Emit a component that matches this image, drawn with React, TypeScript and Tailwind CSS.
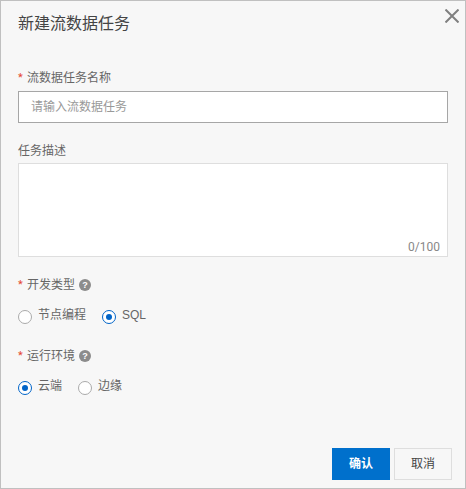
import React from "react";

function Req({ children, help }: { children: React.ReactNode; help?: boolean }) {
  return (
    <div className="flex items-center h-[18px] text-xs leading-[18px] text-[#666666]">
      <span className="text-[#e5452f] w-[9px] font-['Roboto',sans-serif] text-[11px]">*</span>
      <span>{children}</span>
      {help && (
        <span className="ml-[4px] w-3 h-3 rounded-full bg-[#8c8c8c] text-white text-[9px] leading-3 font-bold text-center">?</span>
      )}
    </div>
  );
}

function Radio({ checked, label, className }: { checked?: boolean; label: string; className?: string }) {
  return (
    <label className={`flex items-center h-[18px] text-xs text-[#666666] ${className ?? ""}`}>
      {checked ? (
        <span className="w-[14px] h-[14px] rounded-full border border-[#0064c8] bg-white flex items-center justify-center mr-[6px] mt-[3px]">
          <span className="w-[6px] h-[6px] rounded-full bg-[#0064c8]" />
        </span>
      ) : (
        <span className="w-[14px] h-[14px] rounded-full border border-[#aaaaaa] bg-white mr-[6px] mt-[3px]" />
      )}
      {label}
    </label>
  );
}

export default function App() {
  return (
    <div className="relative w-[466px] h-[489px] bg-[#f7f7f7] border border-[#c0c0c0] px-[17px] flex flex-col font-['Liberation_Sans','Noto_Sans_CJK_SC',sans-serif]">
      <button className="absolute right-[6px] top-[8px] text-[#808080]">
        <svg width="14" height="14" viewBox="0 0 14 14" fill="none" stroke="currentColor" strokeWidth="2">
          <path d="M0.5 0.5 L13.5 13.5 M13.5 0.5 L0.5 13.5" />
        </svg>
      </button>
      <h1 className="mt-[13px] h-[20px] text-base leading-5 font-normal text-[#444444]">新建流数据任务</h1>

      <div className="mt-[35px]">
        <Req>流数据任务名称</Req>
      </div>
      <div className="mt-[4px] w-[430px] h-[32px] bg-white border border-[#a6a6a6] pl-[12px] flex items-center text-xs text-[#999999]">
        请输入流数据任务
      </div>

      <div className="mt-[19px] h-[18px] text-xs leading-[18px] text-[#666666]">任务描述</div>
      <div className="mt-[3px] w-[430px] h-[94px] bg-white border border-[#dedede] relative">
        <span className="absolute right-[7px] bottom-0 text-xs leading-[18px] text-[#888888] font-['Roboto',sans-serif]">0/100</span>
      </div>

      <div className="mt-[19px]">
        <Req help>开发类型</Req>
      </div>
      <div className="mt-[12px] flex items-center">
        <Radio label="节点编程" />
        <Radio checked label="SQL" className="ml-[16px]" />
      </div>

      <div className="mt-[23px]">
        <Req help>运行环境</Req>
      </div>
      <div className="mt-[12px] flex items-center">
        <Radio checked label="云端" />
        <Radio label="边缘" className="ml-[16px]" />
      </div>

      <div className="mt-auto mb-[8px] flex justify-end gap-1 mr-[-4px] w-[434px]">
        <button className="w-[58px] h-[32px] bg-[#0070cc] text-white text-xs font-bold">确认</button>
        <button className="w-[58px] h-[32px] bg-[#f7f7f7] border border-[#dedede] text-[#444444] text-xs">取消</button>
      </div>
    </div>
  );
}
